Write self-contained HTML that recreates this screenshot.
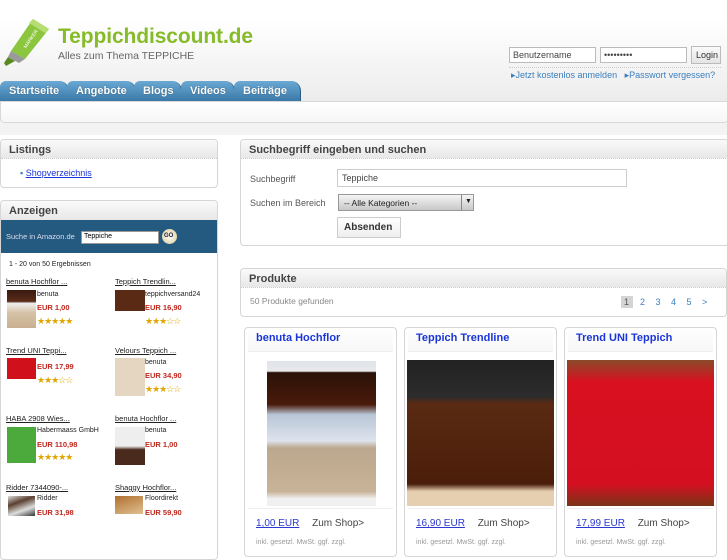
<!DOCTYPE html>
<html><head><meta charset="utf-8"><style>
*{margin:0;padding:0;box-sizing:border-box}
body{width:727px;height:545px;overflow:hidden;background:#fff;font-family:"Liberation Sans",Arial,sans-serif;position:relative}
.abs{position:absolute}
.hdr{left:0;top:0;width:727px;height:135px;background:linear-gradient(#fff 0,#fff 20px,#f1f1f1 80px,#ececec 100px,#f4f4f4 135px)}
.title{left:58px;top:25px;font-size:21px;font-weight:bold;color:#86bb29;letter-spacing:-0.1px}
.sub{left:58px;top:50px;font-size:10.5px;color:#666}
.tab{top:81px;height:20px;background:linear-gradient(#6aa9d4,#3a78a8);border-radius:6px 10px 0 0;color:#fff;font-weight:bold;font-size:11px;padding:4px 0 0 9px;border-right:1px solid #2a5c86;text-shadow:0 0 1px #245}
.bar{left:0;top:101px;width:729px;height:22px;background:linear-gradient(#fff,#f6f6f6);border:1px solid #d8d8d8;border-radius:0 0 5px 5px}
.inp{top:47px;height:16px;border:1px solid #bbb;background:#fff;font-size:9px;color:#444;padding:2px 3px}
.box{border:1px solid #d6d6d6;border-radius:4px;background:#fff;overflow:hidden}
.bh{height:19px;background:linear-gradient(#fafafa,#e8e8e8);border-bottom:1px dotted #ccc;font-weight:bold;font-size:11px;color:#444;padding:4px 8px}
.lbl{font-size:9px;color:#555}
.am{font-size:7px;color:#222}
.am u{display:block;font-size:7.5px}
.price{color:#c0281f;font-weight:bold;font-size:7.5px}
.stars{color:#e0a500;font-size:9px;letter-spacing:-1px}
.card{top:327px;width:153px;height:230px}
.ct{color:#1a35d8;font-weight:bold;font-size:11px;padding:4px 8px;height:24px;border-bottom:1px solid #eee;margin:0 3px;background:linear-gradient(#fff,#f7f7f7)}
.cp{position:absolute;top:190px;left:11px;font-size:10px;color:#2a3ad0}
.cp u{margin-right:10px}
.cp span{color:#444}
.ci{position:absolute;top:211px;left:11px;font-size:7px;color:#999}
</style></head><body>
<div class="abs hdr"></div>
<svg class="abs" style="left:3px;top:17px" width="48" height="50" viewBox="0 0 48 50"><path d="M30 2 L46 12 L22 42 L8 34 Z" fill="#8cc63f"/><path d="M30 2 L46 12 L42 16 L26 6Z" fill="#b5dd72"/><path d="M8 34 L22 42 L16 46 L5 40Z" fill="#9a9a9a"/><path d="M5 40 L12 44 L3 49 L1 46Z" fill="#5a8a1f"/><text x="18" y="30" font-size="5" fill="#fff" transform="rotate(-55 22 26)" font-family="Liberation Sans">MARKER</text></svg>
<div class="abs title">Teppichdiscount.de</div>
<div class="abs sub">Alles zum Thema TEPPICHE</div>
<div class="abs inp" style="left:509px;width:87px">Benutzername</div>
<div class="abs inp" style="left:600px;width:87px">•••••••••</div>
<div class="abs" style="left:691px;top:46px;width:30px;height:18px;border:1px solid #bbb;background:linear-gradient(#fafafa,#e4e4e4);font-size:9px;padding:3px 0 0 4px;color:#333">Login</div>
<div class="abs" style="left:509px;top:67px;width:212px;border-top:1px dotted #ccc"></div>
<div class="abs" style="left:511px;top:70px;font-size:9px;color:#3a7fc0">▸Jetzt kostenlos anmelden &nbsp;&nbsp;▸Passwort vergessen?</div>
<div class="abs tab" style="left:0;width:69px">Startseite</div>
<div class="abs tab" style="left:67px;width:69px;padding-left:9px">Angebote</div>
<div class="abs tab" style="left:134px;width:48px">Blogs</div>
<div class="abs tab" style="left:181px;width:54px">Videos</div>
<div class="abs tab" style="left:234px;width:67px">Beiträge</div>
<div class="abs bar"></div>

<div class="abs box" style="left:0;top:139px;width:218px;height:49px"><div class="bh">Listings</div>
<div style="font-size:9px;padding:9px 0 0 19px;color:#1a35d8"><span style="color:#3a7fc0">▪</span> <u>Shopverzeichnis</u></div></div>

<div class="abs box" style="left:0;top:200px;width:218px;height:360px"><div class="bh" style="border:0">Anzeigen</div>
<div style="background:#245a80;height:33px;margin-top:0;position:relative">
<span style="position:absolute;left:5px;top:12px;font-size:7.5px;color:#dde">Suche in Amazon.de</span>
<div style="position:absolute;left:80px;top:11px;width:78px;height:13px;background:#fff;border:1px solid #999;font-size:7px;padding:1px 2px">Teppiche</div>
<div style="position:absolute;left:161px;top:9px;width:15px;height:15px;border-radius:50%;background:radial-gradient(#fff,#d8c890);font-size:6px;font-weight:bold;color:#223;padding:4px 0 0 2px">GO</div></div>
<div class="am" style="position:absolute;left:8px;top:60px;font-size:7px">1 - 20 von 50 Ergebnissen</div>
</div>

<div class="abs am" style="left:6px;top:277px"><u>benuta Hochflor ...</u></div>
<div class="abs" style="left:7px;top:290px;width:29px;height:38px;background:linear-gradient(#3a1a10 0,#5a2a18 30%,#eee 35%,#d6c2a6 60%,#c9b090)"></div>
<div class="abs am" style="left:37px;top:291px">benuta</div><div class="abs price" style="left:37px;top:303px">EUR 1,00</div><div class="abs stars" style="left:37px;top:316px">★★★★★</div>
<div class="abs am" style="left:115px;top:277px"><u>Teppich Trendlin...</u></div>
<div class="abs" style="left:115px;top:290px;width:30px;height:21px;background:#5a2a14"></div>
<div class="abs am" style="left:145px;top:291px">teppichversand24</div><div class="abs price" style="left:145px;top:303px">EUR 16,90</div><div class="abs stars" style="left:145px;top:316px">★★★☆☆</div>

<div class="abs am" style="left:6px;top:346px"><u>Trend UNI Teppi...</u></div>
<div class="abs" style="left:7px;top:358px;width:29px;height:21px;background:#d0101a"></div>
<div class="abs price" style="left:37px;top:362px">EUR 17,99</div><div class="abs stars" style="left:37px;top:375px">★★★☆☆</div>
<div class="abs am" style="left:115px;top:346px"><u>Velours Teppich ...</u></div>
<div class="abs" style="left:115px;top:358px;width:30px;height:38px;background:#e4d6c0"></div>
<div class="abs am" style="left:145px;top:359px">benuta</div><div class="abs price" style="left:145px;top:371px">EUR 34,90</div><div class="abs stars" style="left:145px;top:384px">★★★☆☆</div>

<div class="abs am" style="left:6px;top:414px"><u>HABA 2908 Wies...</u></div>
<div class="abs" style="left:7px;top:427px;width:29px;height:36px;background:#4caa3c"></div>
<div class="abs am" style="left:37px;top:427px">Habermaass GmbH</div><div class="abs price" style="left:37px;top:440px">EUR 110,98</div><div class="abs stars" style="left:37px;top:452px">★★★★★</div>
<div class="abs am" style="left:115px;top:414px"><u>benuta Hochflor ...</u></div>
<div class="abs" style="left:115px;top:427px;width:30px;height:38px;background:linear-gradient(#eee 50%,#4a2a1c 60%)"></div>
<div class="abs am" style="left:145px;top:427px">benuta</div><div class="abs price" style="left:145px;top:440px">EUR 1,00</div>

<div class="abs am" style="left:6px;top:483px"><u>Ridder 7344090-...</u></div>
<div class="abs" style="left:8px;top:496px;width:27px;height:20px;background:linear-gradient(160deg,#ddd,#5a4030,#ddd,#333)"></div>
<div class="abs am" style="left:37px;top:495px">Ridder</div><div class="abs price" style="left:37px;top:508px">EUR 31,98</div>
<div class="abs am" style="left:115px;top:483px"><u>Shaggy Hochflor...</u></div>
<div class="abs" style="left:115px;top:496px;width:28px;height:18px;background:linear-gradient(160deg,#b07030,#e0c090)"></div>
<div class="abs am" style="left:145px;top:495px">Floordirekt</div><div class="abs price" style="left:145px;top:508px">EUR 59,90</div>

<div class="abs box" style="left:240px;top:139px;width:489px;height:107px"><div class="bh">Suchbegriff eingeben und suchen</div></div>
<div class="abs lbl" style="left:250px;top:174px">Suchbegriff</div>
<div class="abs" style="left:337px;top:169px;width:290px;height:18px;border:1px solid #ccc;font-size:9px;color:#444;padding:3px 4px">Teppiche</div>
<div class="abs lbl" style="left:250px;top:198px">Suchen im Bereich</div>
<div class="abs" style="left:338px;top:194px;width:136px;height:17px;border:1px solid #999;background:linear-gradient(#f4f4f4,#c8c8c8);font-size:8.5px;color:#222;padding:3px 5px">-- Alle Kategorien --<span style="position:absolute;right:0;top:0;width:12px;height:15px;border-left:1px solid #888;font-size:7px;padding:3px 0 0 3px">▼</span></div>
<div class="abs" style="left:337px;top:217px;width:64px;height:21px;border:1px solid #ccc;background:linear-gradient(#fff,#eee);font-size:10px;font-weight:bold;color:#333;padding:4px 0 0 6px">Absenden</div>

<div class="abs box" style="left:240px;top:268px;width:487px;height:49px"><div class="bh">Produkte</div></div>
<div class="abs lbl" style="left:250px;top:296px;color:#888;font-size:8.5px">50 Produkte gefunden</div>
<div class="abs" style="left:621px;top:296px;width:12px;height:12px;background:#d4d4d4"></div>
<div class="abs" style="left:624px;top:297px;font-size:9px;color:#555;word-spacing:0">1</div>
<div class="abs" style="left:640px;top:297px;font-size:9px;color:#3a7fc0;word-spacing:8px">2 3 4 5 &gt;</div>

<div class="abs box card" style="left:244px"><div class="ct">benuta Hochflor</div>
<div style="position:absolute;left:22px;top:33px;width:109px;height:145px;background:linear-gradient(#e0e4ea 0,#e8e8ea 7%,#2a1208 8%,#4a1a0a 30%,#b8c6d6 37%,#dde3ec 55%,#bca88e 60%,#c8b298 90%,#f0f0f0 95%)"></div>
<div style="position:absolute;left:3px;top:180px;width:145px;border-top:1px solid #eee"></div>
<div class="cp"><u>1,00 EUR</u> <span>Zum Shop&gt;</span></div><div class="ci">inkl. gesetzl. MwSt. ggf. zzgl.</div></div>

<div class="abs box card" style="left:404px"><div class="ct">Teppich Trendline</div>
<div style="position:absolute;left:2px;top:32px;width:147px;height:146px;background:linear-gradient(#222 0,#2c2c2c 25%,#5a2a12 30%,#4a1e0a 85%,#e6cfb0 90%)"></div>
<div style="position:absolute;left:3px;top:180px;width:145px;border-top:1px solid #eee"></div>
<div class="cp"><u>16,90 EUR</u> <span>Zum Shop&gt;</span></div><div class="ci">inkl. gesetzl. MwSt. ggf. zzgl.</div></div>

<div class="abs box card" style="left:564px"><div class="ct">Trend UNI Teppich</div>
<div style="position:absolute;left:2px;top:32px;width:147px;height:146px;background:linear-gradient(#8a4a2a 0,#d81020 15%,#d41020 85%,#7a3418 100%)"></div>
<div style="position:absolute;left:3px;top:180px;width:145px;border-top:1px solid #eee"></div>
<div class="cp"><u>17,99 EUR</u> <span>Zum Shop&gt;</span></div><div class="ci">inkl. gesetzl. MwSt. ggf. zzgl.</div></div>
</body></html>
